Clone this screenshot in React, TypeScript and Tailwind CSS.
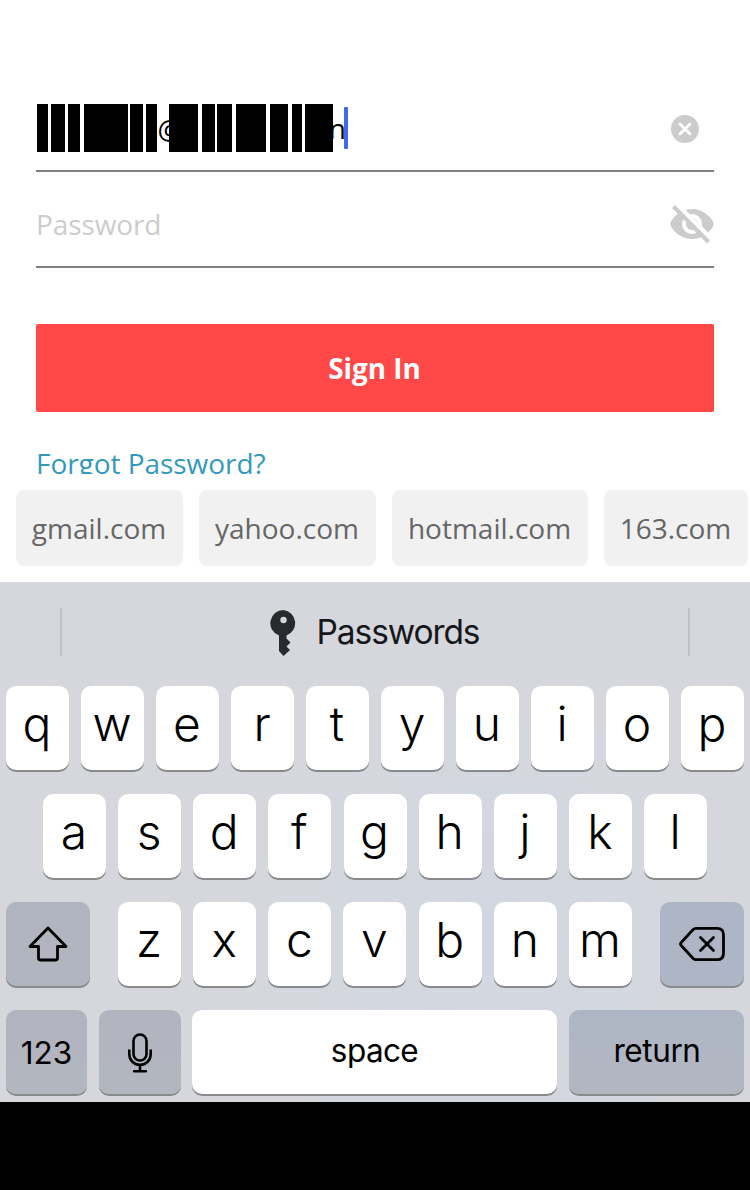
import type { ReactNode } from "react";

const openSans = "font-['Open_Sans',sans-serif]";
const inter = "font-['Inter',sans-serif]";

const maskBars = [
  "w-[11px]",
  "ml-[3px] w-[14px]",
  "ml-[3px] w-[12px]",
  "ml-[4px] w-[44px]",
  "ml-[2px] w-[13px]",
  "ml-[3px] w-[11px]",
  "ml-[12px] w-[29px]",
  "ml-[4px] w-[13px]",
  "ml-[2px] w-[15px]",
  "ml-[4px] w-[30px]",
  "ml-[4px] w-[18px]",
  "ml-[4px] w-[10px]",
  "ml-[3px] w-[28px]",
];

const domains = [
  { name: "gmail.com", width: "w-[167px]" },
  { name: "yahoo.com", width: "w-[177px]" },
  { name: "hotmail.com", width: "w-[196px]" },
  { name: "163.com", width: "w-[144px]" },
];

function Key({ children, className }: { children: ReactNode; className: string }) {
  return (
    <button
      className={`flex h-[84px] shrink-0 items-center justify-center rounded-[10px] text-black shadow-[0_2px_0_#898a8d] ${className}`}
    >
      {children}
    </button>
  );
}

function Letter({ char }: { char: string }) {
  return (
    <Key className="w-[63px] bg-white pr-px pb-[8px] text-[48px] leading-none font-[350]">
      {char}
    </Key>
  );
}

export default function App() {
  return (
    <div className={`flex h-[1190px] w-[750px] flex-col overflow-hidden bg-white ${openSans}`}>
      <main className="flex h-[474px] flex-col overflow-hidden px-9 pt-[86px]">
        <div className="flex h-[86px] shrink-0 items-center justify-between border-b-2 border-[#808080] pr-[15px]">
          <div className="relative flex h-12 w-[312px] items-center text-[28px] leading-none text-black">
            <span className="ml-[121.5px] pt-px">@</span>
            <span className="ml-auto mr-[2px]">n</span>
            <div className="absolute inset-y-0 left-px flex">
              {maskBars.map((bar, i) => (
                <span key={i} className={`h-full bg-black ${bar}`} />
              ))}
            </div>
            <span className="absolute top-[3px] right-0 h-[42px] w-[4px] rounded-[1px] bg-[#4169f0]" />
          </div>
          <svg className="mt-[2px]" width="28" height="28" viewBox="0 0 28 28">
            <circle cx="14" cy="14" r="14" fill="#cccccc" />
            <path d="M9 9l10 10M19 9L9 19" stroke="white" strokeWidth="2.8" strokeLinecap="round" />
          </svg>
        </div>
        <div className="flex h-[96px] shrink-0 items-center justify-between border-b-2 border-[#808080] pt-[10px]">
          <span className="text-[28px] tracking-[-0.1px] text-[#cccccc]">Password</span>
          <svg width="44" height="40" viewBox="0 0 44 40" fill="none">
            <path
              fill="#cccccc"
              fillRule="evenodd"
              d="M22 5C12 5 3.500 11.200 0 20c3.500 8.800 12 15 22 15s18.500-6.200 22-15C40.500 11.200 32 5 22 5zm0 25a10 10 0 1 1 0-20 10 10 0 0 1 0 20z"
            />
            <circle cx="22" cy="20" r="6" fill="#cccccc" />
            <path d="M7 .5L42 35.500" stroke="white" strokeWidth="4.500" />
            <path d="M3.500 2.500L38.500 38" stroke="#cccccc" strokeWidth="4" />
          </svg>
        </div>
        <button className="mt-14 flex h-[88px] shrink-0 items-center justify-center rounded-[2px] bg-[#ff4948] pt-[2px] pr-px text-[27.8px] font-bold text-white">
          Sign In
        </button>
        <a className="mt-[30px] text-[28px] leading-[42px] tracking-[-0.05px] text-[#3399bb]">Forgot Password?</a>
      </main>

      <div className="flex h-[108px] shrink-0 gap-4 overflow-hidden pt-4 pl-4">
        {domains.map((d) => (
          <button
            key={d.name}
            className={`flex h-[76px] shrink-0 items-center justify-center rounded-[8px] bg-[#f1f1f1] pr-px text-[28px] text-[#666666] ${d.width}`}
          >
            {d.name}
          </button>
        ))}
      </div>

      <section
        className={`flex h-[520px] shrink-0 flex-col bg-[radial-gradient(circle_at_65%_68%,#d1d7e1,#d6d7dc_50%)] ${inter}`}
      >
        <div className="flex h-[104px] shrink-0 items-center justify-between px-[60px] pb-[4px]">
          <span className="h-12 w-[2px] bg-[#c0c1c6]" />
          <div className="flex items-center gap-[20px] pt-px pr-px text-[33.5px] tracking-[-1.1px] text-[#15171b]">
            <svg width="27" height="46" viewBox="0 0 27 46" fill="#282b2d">
              <path
                fillRule="evenodd"
                d="M13.500 0a13.200 13.200 0 0 0-4.500 25.600V41l4.500 5 6.500-6-3.500-3.500 4-4-4-4v-3A13.200 13.200 0 0 0 13.500 0zm0 6.800a3.200 3.200 0 1 1 0 6.400 3.200 3.200 0 0 1 0-6.400z"
              />
            </svg>
            <span>Passwords</span>
          </div>
          <span className="h-12 w-[2px] bg-[#c0c1c6]" />
        </div>

        <div className="flex flex-col gap-6">
          <div className="flex gap-3 px-[6px]">
            {[..."qwertyuiop"].map((c) => (
              <Letter key={c} char={c} />
            ))}
          </div>
          <div className="flex justify-between pr-[43px] pl-[43px]">
            {[..."asdfghjkl"].map((c) => (
              <Letter key={c} char={c} />
            ))}
          </div>
          <div className="flex justify-between px-[6px]">
            <Key className="w-[84px] bg-[#b0b5bf]">
              <svg width="40" height="36" viewBox="0 0 40 36" fill="none" stroke="black" strokeWidth="2.800" strokeLinejoin="round">
                <path d="M20 2L2 20.500h8.500V32q0 2 2 2h15q2 0 2-2V20.500H38z" />
              </svg>
            </Key>
            <div className="flex w-[514px] justify-between">
              {[..."zxcvbnm"].map((c) => (
                <Letter key={c} char={c} />
              ))}
            </div>
            <Key className="w-[84px] bg-[#aeb6c5]">
              <svg width="46" height="36" viewBox="0 0 46 36" fill="none" stroke="black" strokeWidth="2.800" strokeLinecap="round" strokeLinejoin="round">
                <path d="M17 2.300h21q6.500 0 6.500 6.500v18.400q0 6.500-6.500 6.500H17q-1.500 0-2.800-1.200L2.200 19.500q-1.300-1.500 0-3L14.200 3.500Q15.500 2.300 17 2.300z" />
                <path d="M21.500 11.500l13 13M34.500 11.500l-13 13" />
              </svg>
            </Key>
          </div>
          <div className="flex pl-[6px]">
            <Key className="w-[81px] bg-[linear-gradient(#b2b3bf,#b2b7bf)] text-[31.5px]">
              <span className="pt-[2px]">123</span>
            </Key>
            <Key className="ml-[12px] w-[82px] bg-[linear-gradient(#b2b3bf,#b2b7bf)]">
              <svg className="mt-[2px]" width="24" height="40" viewBox="0 0 24 40" fill="none" stroke="black" strokeWidth="2.600" strokeLinecap="round">
                <rect x="5.500" y="1.500" width="13" height="26" rx="6.500" />
                <path d="M1.300 17.500v3.700a10.700 10.700 0 0 0 21.400 0v-3.700M12 32v6M6.200 38.300h11.600" />
              </svg>
            </Key>
            <Key className="ml-[11px] w-[365px] bg-white text-[31.5px] tracking-[-0.6px]">
              <span className="pb-[2px]">space</span>
            </Key>
            <Key className="ml-[12px] w-[175px] bg-[linear-gradient(#aeb6c5,#b2b6c0)] text-[31.5px] tracking-[-0.4px]">
              <span className="pb-[2px] pl-px">return</span>
            </Key>
          </div>
        </div>
      </section>
      <div className="h-[88px] shrink-0 bg-black" />
    </div>
  );
}
